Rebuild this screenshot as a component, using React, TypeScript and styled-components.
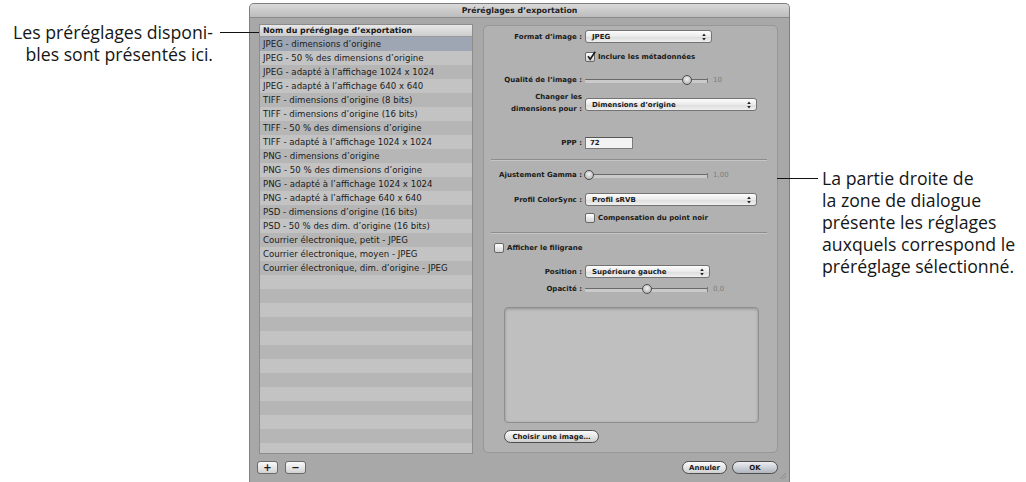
import React from "react"
import styled, { createGlobalStyle, css } from "styled-components"

const GlobalStyle = createGlobalStyle`
  html, body {
    margin: 0;
    padding: 0;
    background: #fff;
  }
  * {
    box-sizing: border-box;
  }
`

const UI_FONT = `"Lucida Grande", "DejaVu Sans", sans-serif`
const NOTE_FONT = `"Open Sans", Lato, sans-serif`

const Page = styled.div`
  display: flex;
  align-items: flex-start;
  width: 1026px;
  height: 482px;
  overflow: hidden;
  background: #fff;
`

type NoteProps = {
  $side: "left" | "right"
}

const Note = styled.div<NoteProps>`
  position: relative;
  font-family: ${NOTE_FONT};
  font-size: 17.7px;
  line-height: 22px;
  color: #161616;
  white-space: nowrap;
  ${props =>
    props.$side === "left" &&
    css`
      flex: 0 0 249px;
      padding: 21px 36px 0 0;
      text-align: right;
    `}
  ${props =>
    props.$side === "right" &&
    css`
      flex: 1;
      padding: 167px 0 0 32px;
    `}
`

const Leader = styled.span<{ $left: number; $top: number; $width: number }>`
  position: absolute;
  left: ${props => props.$left}px;
  top: ${props => props.$top}px;
  width: ${props => props.$width}px;
  height: 1px;
  background: #111;
  z-index: 2;
`

const Window = styled.div`
  position: relative;
  flex: 0 0 541px;
  height: 479px;
  margin-top: 3px;
  display: flex;
  flex-direction: column;
  border: 1px solid #7e7e7e;
  border-bottom: none;
  border-radius: 5px 5px 0 0;
  background: #a8a8a8;
  font-family: ${UI_FONT};
  color: #1a1a1a;
`

const TitleBar = styled.div`
  flex: none;
  height: 14px;
  display: flex;
  align-items: center;
  justify-content: center;
  border-bottom: 1px solid #8a8a8a;
  border-radius: 4px 4px 0 0;
  background: linear-gradient(#dadada, #bcbcbc);
  font-size: 7.8px;
  font-weight: bold;
  color: #222;
`

const WindowBody = styled.div`
  display: grid;
  grid-template-columns: 214px 295px;
  grid-template-rows: 430px auto;
  column-gap: 10px;
  row-gap: 7px;
  padding: 6px 11px 0 9px;
`

const PresetList = styled.div`
  display: flex;
  flex-direction: column;
  overflow: hidden;
  border: 1px solid #8c8c8c;
  background: #b6b6b6;
`

const ListHeader = styled.div`
  flex: none;
  height: 12px;
  padding-left: 3px;
  border-bottom: 1px solid #9a9a9a;
  background: linear-gradient(#e8e8e8, #cdcdcd);
  font-size: 7.9px;
  font-weight: bold;
  line-height: 11px;
  white-space: nowrap;
`

const ListRow = styled.div<{ $selected?: boolean; $light?: boolean }>`
  flex: none;
  height: 14px;
  padding-left: 3px;
  font-size: 8.6px;
  line-height: 14px;
  white-space: nowrap;
  background: ${props =>
    props.$selected ? "#9fa6b3" : props.$light ? "#c3c3c3" : "#b6b6b6"};
`

const ListTools = styled.div`
  display: flex;
  gap: 7px;
  margin-left: -2px;
`

const SquareButton = styled.div`
  width: 21px;
  height: 13px;
  display: flex;
  align-items: center;
  justify-content: center;
  border: 1px solid #6a6a6a;
  border-radius: 3px;
  background: linear-gradient(#fafafa, #d2d2d2);
  font-size: 10px;
  font-weight: bold;
  line-height: 1;
`

const DialogButtons = styled.div`
  display: flex;
  justify-content: flex-end;
  gap: 5px;
`

const GroupBox = styled.div`
  margin-top: 1px;
  height: 428px;
  display: flex;
  flex-direction: column;
  border: 1px solid #979797;
  border-radius: 5px;
  background: #b1b1b1;
`

const FieldRow = styled.div<{ $gap: number; $indent?: number }>`
  display: grid;
  grid-template-columns: 98px auto;
  column-gap: 3px;
  align-items: center;
  justify-content: start;
  margin-top: ${props => props.$gap}px;
  padding-left: ${props => props.$indent || 0}px;
`

const Label = styled.div`
  text-align: right;
  font-size: 7px;
  font-weight: bold;
  line-height: 12px;
  white-space: nowrap;
`

const Popup = styled.div<{ $width: number; $nudge?: number }>`
  width: ${props => props.$width}px;
  height: 13px;
  display: flex;
  align-items: center;
  justify-content: space-between;
  margin-top: ${props => props.$nudge || 0}px;
  padding: 0 5px 0 6px;
  border: 1px solid #737373;
  border-radius: 3px;
  background: linear-gradient(#fdfdfd, #eaeaea 50%, #dcdcdc 51%, #efefef);
  font-size: 7px;
  font-weight: bold;

  svg {
    width: 4px;
    height: 8px;
  }
`

const CheckLine = styled.div`
  display: flex;
  align-items: center;
  gap: 3px;
  height: 11px;
  font-size: 7px;
  font-weight: bold;
  white-space: nowrap;
`

const Box = styled.span`
  position: relative;
  width: 10px;
  height: 10px;
  flex: none;
  border: 1px solid #686868;
  border-radius: 2px;
  background: linear-gradient(#ffffff, #d4d4d4);

  svg {
    position: absolute;
    left: 0;
    top: -2px;
    width: 10px;
    height: 10px;
  }
`

const SliderLine = styled.div`
  display: flex;
  align-items: center;
  gap: 5px;
  height: 12px;
`

const Track = styled.div<{ $pos: number }>`
  position: relative;
  width: 123px;
  height: 12px;

  &::before {
    content: "";
    position: absolute;
    left: 0;
    right: 0;
    top: 5px;
    height: 3px;
    border-top: 1px solid #6a6a6a;
    border-radius: 1px;
    background: #cacaca;
  }

  &::after {
    content: "";
    position: absolute;
    right: 0;
    top: 4px;
    width: 1px;
    height: 5px;
    background: #7a7a7a;
  }

  span {
    position: absolute;
    top: 1px;
    left: calc(${props => props.$pos}% - 5px);
    width: 10px;
    height: 10px;
    border: 1.5px solid #4c4c4c;
    border-radius: 50%;
    background: radial-gradient(circle at 50% 40%, #f4f4f4, #a3a3a3);
    z-index: 1;
  }
`

const SliderValue = styled.span`
  font-size: 7px;
  color: #7c7c7c;
`

const TextField = styled.div`
  width: 48px;
  height: 12px;
  padding-left: 4px;
  border: 1px solid #7b7b7b;
  border-top-color: #555;
  background: #f3f3f3;
  font-size: 7px;
  font-weight: bold;
  line-height: 10px;
`

const Separator = styled.div<{ $gap: number }>`
  height: 2px;
  margin: ${props => props.$gap}px 10px 0 7px;
  border-top: 1px solid #8c8c8c;
  border-bottom: 1px solid #c6c6c6;
`

const Well = styled.div`
  width: 255px;
  height: 116px;
  margin: 12px 0 0 20px;
  border: 1px solid #8e8e8e;
  border-radius: 4px;
  background: #bfbfbf;
  box-shadow: inset 0 1px 3px rgba(0, 0, 0, 0.25);
`

const PushButton = styled.div<{ $width: number; $default?: boolean }>`
  width: ${props => props.$width}px;
  height: 13px;
  display: flex;
  align-items: center;
  justify-content: center;
  border: 1px solid #4e4e4e;
  border-radius: 7px;
  background: ${props =>
    props.$default
      ? "linear-gradient(#eceef2, #b0b5be)"
      : "linear-gradient(#fbfbfb, #d0d0d0)"};
  font-size: 7px;
  font-weight: bold;
  white-space: nowrap;
`

const ChooseButton = styled(PushButton)`
  margin: 7px 0 0 20px;
`

const Grip = styled.svg`
  position: absolute;
  right: 2px;
  bottom: 2px;
  width: 9px;
  height: 9px;
`

const presets = [
  "JPEG - dimensions d’origine",
  "JPEG - 50 % des dimensions d’origine",
  "JPEG - adapté à l’affichage 1024 x 1024",
  "JPEG - adapté à l’affichage 640 x 640",
  "TIFF - dimensions d’origine (8 bits)",
  "TIFF - dimensions d’origine (16 bits)",
  "TIFF - 50 % des dimensions d’origine",
  "TIFF - adapté à l’affichage 1024 x 1024",
  "PNG - dimensions d’origine",
  "PNG - 50 % des dimensions d’origine",
  "PNG - adapté à l’affichage 1024 x 1024",
  "PNG - adapté à l’affichage 640 x 640",
  "PSD - dimensions d’origine (16 bits)",
  "PSD - 50 % des dim. d’origine (16 bits)",
  "Courrier électronique, petit - JPEG",
  "Courrier électronique, moyen - JPEG",
  "Courrier électronique, dim. d’origine - JPEG",
]

const ROW_COUNT = 30

const Arrows = () => (
  <svg viewBox="0 0 4 8">
    <path d="M2 0.5 L3.8 3 L0.2 3 Z M2 7.5 L3.8 5 L0.2 5 Z" fill="#222" />
  </svg>
)

const Checkbox = ({ checked, label }: { checked?: boolean; label: string }) => (
  <CheckLine>
    <Box>
      {checked && (
        <svg viewBox="0 0 10 10">
          <path
            d="M2 5.2 L4.2 8.2 L9.2 0.8"
            fill="none"
            stroke="#1f1f1f"
            strokeWidth="1.7"
          />
        </svg>
      )}
    </Box>
    {label}
  </CheckLine>
)

const Slider = ({ pos, value }: { pos: number; value: string }) => (
  <SliderLine>
    <Track $pos={pos}>
      <span />
    </Track>
    <SliderValue>{value}</SliderValue>
  </SliderLine>
)

export default function App() {
  const rows = Array.from({ length: ROW_COUNT }, (_, i) => presets[i] || "")

  return (
    <Page>
      <GlobalStyle />
      <Note $side="left">
        Les préréglages disponi-
        <br />
        bles sont présentés ici.
        <Leader $left={220} $top={32} $width={39} />
      </Note>

      <Window>
        <TitleBar>Préréglages d’exportation</TitleBar>
        <WindowBody>
          <PresetList>
            <ListHeader>Nom du préréglage d’exportation</ListHeader>
            {rows.map((name, i) => (
              <ListRow key={i} $selected={i === 0} $light={i % 2 === 1}>
                {name}
              </ListRow>
            ))}
          </PresetList>

          <GroupBox>
            <FieldRow $gap={4}>
              <Label>Format d’image :</Label>
              <Popup $width={127}>
                JPEG
                <Arrows />
              </Popup>
            </FieldRow>
            <FieldRow $gap={8}>
              <span />
              <Checkbox checked label="Inclure les métadonnées" />
            </FieldRow>
            <FieldRow $gap={12}>
              <Label>Qualité de l’image :</Label>
              <Slider pos={83} value="10" />
            </FieldRow>
            <FieldRow $gap={5}>
              <Label>
                Changer les
                <br />
                dimensions pour :
              </Label>
              <Popup $width={172} $nudge={3}>
                Dimensions d’origine
                <Arrows />
              </Popup>
            </FieldRow>
            <FieldRow $gap={22}>
              <Label>PPP :</Label>
              <TextField>72</TextField>
            </FieldRow>

            <Separator $gap={10} />

            <FieldRow $gap={8}>
              <Label>Ajustement Gamma :</Label>
              <Slider pos={3} value="1,00" />
            </FieldRow>
            <FieldRow $gap={12}>
              <Label>Profil ColorSync :</Label>
              <Popup $width={172}>
                Profil sRVB
                <Arrows />
              </Popup>
            </FieldRow>
            <FieldRow $gap={6}>
              <span />
              <Checkbox label="Compensation du point noir" />
            </FieldRow>

            <Separator $gap={9} />

            <FieldRow $gap={8} $indent={10}>
              <Checkbox label="Afficher le filigrane" />
            </FieldRow>
            <FieldRow $gap={12}>
              <Label>Position :</Label>
              <Popup $width={125}>
                Supérieure gauche
                <Arrows />
              </Popup>
            </FieldRow>
            <FieldRow $gap={5}>
              <Label>Opacité :</Label>
              <Slider pos={50} value="0,0" />
            </FieldRow>

            <Well />
            <ChooseButton $width={95}>Choisir une image…</ChooseButton>
          </GroupBox>

          <ListTools>
            <SquareButton>+</SquareButton>
            <SquareButton>−</SquareButton>
          </ListTools>
          <DialogButtons>
            <PushButton $width={45}>Annuler</PushButton>
            <PushButton $width={46} $default>
              OK
            </PushButton>
          </DialogButtons>
        </WindowBody>
        <Grip viewBox="0 0 9 9">
          <path d="M8 2 L2 8 M8 5 L5 8" stroke="#8a8a8a" strokeWidth="1" />
        </Grip>
      </Window>

      <Note $side="right">
        La partie droite de
        <br />
        la zone de dialogue
        <br />
        présente les réglages
        <br />
        auxquels correspond le
        <br />
        préréglage sélectionné.
        <Leader $left={-13} $top={178} $width={41} />
      </Note>
    </Page>
  )
}
